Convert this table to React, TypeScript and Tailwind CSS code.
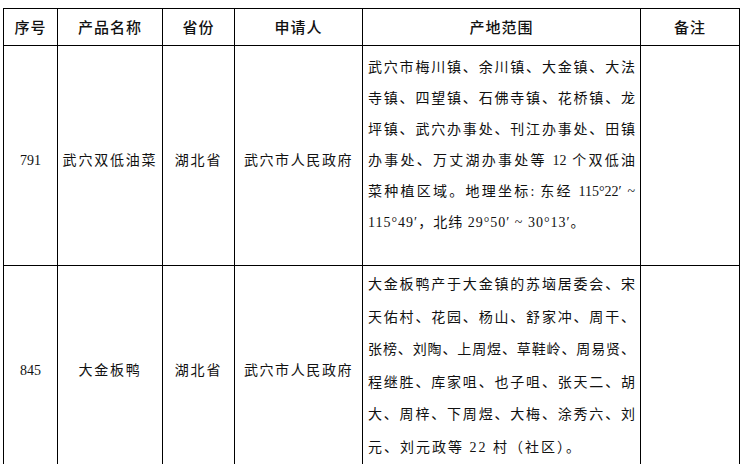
const headers = ['序号', '产品名称', '省份', '申请人', '产地范围', '备注'];

const rows = [
  {
    no: '791',
    name: '武穴双低油菜',
    province: '湖北省',
    applicant: '武穴市人民政府',
    height: 'h-[220px]',
    textClass: 'pt-[6px] leading-[31px]',
    lastClass: 'tracking-[1px]',
    lines: [
      '武穴市梅川镇、余川镇、大金镇、大法',
      '寺镇、四望镇、石佛寺镇、花桥镇、龙',
      '坪镇、武穴办事处、刊江办事处、田镇',
      '办事处、万丈湖办事处等 12 个双低油',
      '菜种植区域。地理坐标: 东经 115°22′ ~',
      '115°49′，北纬 29°50′ ~ 30°13′。',
    ],
  },
  {
    no: '845',
    name: '大金板鸭',
    province: '湖北省',
    applicant: '武穴市人民政府',
    height: 'h-[195px]',
    textClass: 'pt-[3px] leading-[32.6px]',
    lastClass: 'tracking-[2px]',
    lines: [
      '大金板鸭产于大金镇的苏垴居委会、宋',
      '天佑村、花园、杨山、舒家冲、周干、',
      '张榜、刘陶、上周煜、草鞋岭、周易贤、',
      '程继胜、库家咀、也子咀、张天二、胡',
      '大、周梓、下周煜、大梅、涂秀六、刘',
      '元、刘元政等 22 村（社区）。',
    ],
  },
];

const widths = ['w-[54px]', 'w-[105px]', 'w-[72px]', 'w-[128px]', 'w-[278px]', 'w-[99px]'];

export default function App() {
  return (
    <div className="w-[743px] h-[464px] bg-white pt-[8px] pl-[3px] text-[#111]">
      <table className="table-fixed border-collapse w-[737px]">
        <colgroup>
          {widths.map((w, i) => (
            <col key={i} className={w} />
          ))}
        </colgroup>
        <thead>
          <tr className="h-[37px]">
            {headers.map((h) => (
              <th
                key={h}
                className="border border-black p-0 text-center align-middle font-medium text-[15px] tracking-[1px] font-['Noto_Sans_CJK_SC',sans-serif]"
              >
                {h}
              </th>
            ))}
          </tr>
        </thead>
        <tbody className="font-['Liberation_Serif','Noto_Sans_CJK_SC',serif] text-[14px]">
          {rows.map((r) => (
            <tr key={r.no} className={r.height}>
              <td className="border border-black p-0 pt-[10px] text-center align-middle">{r.no}</td>
              <td className="border border-black p-0 pt-[10px] text-center align-middle tracking-[1.8px] whitespace-nowrap">
                {r.name}
              </td>
              <td className="border border-black p-0 pt-[10px] text-center align-middle tracking-[1.8px]">
                {r.province}
              </td>
              <td className="border border-black p-0 pt-[10px] text-center align-middle tracking-[1.6px] whitespace-nowrap">
                {r.applicant}
              </td>
              <td className={`border border-black px-[5px] pb-0 align-top ${r.textClass}`}>
                {r.lines.map((line, i) => (
                  <div
                    key={i}
                    className={
                      i < r.lines.length - 1
                        ? 'whitespace-nowrap text-justify [text-align-last:justify]'
                        : `whitespace-nowrap text-left ${r.lastClass}`
                    }
                  >
                    {line}
                  </div>
                ))}
              </td>
              <td className="border border-black p-0" />
            </tr>
          ))}
        </tbody>
      </table>
    </div>
  );
}
